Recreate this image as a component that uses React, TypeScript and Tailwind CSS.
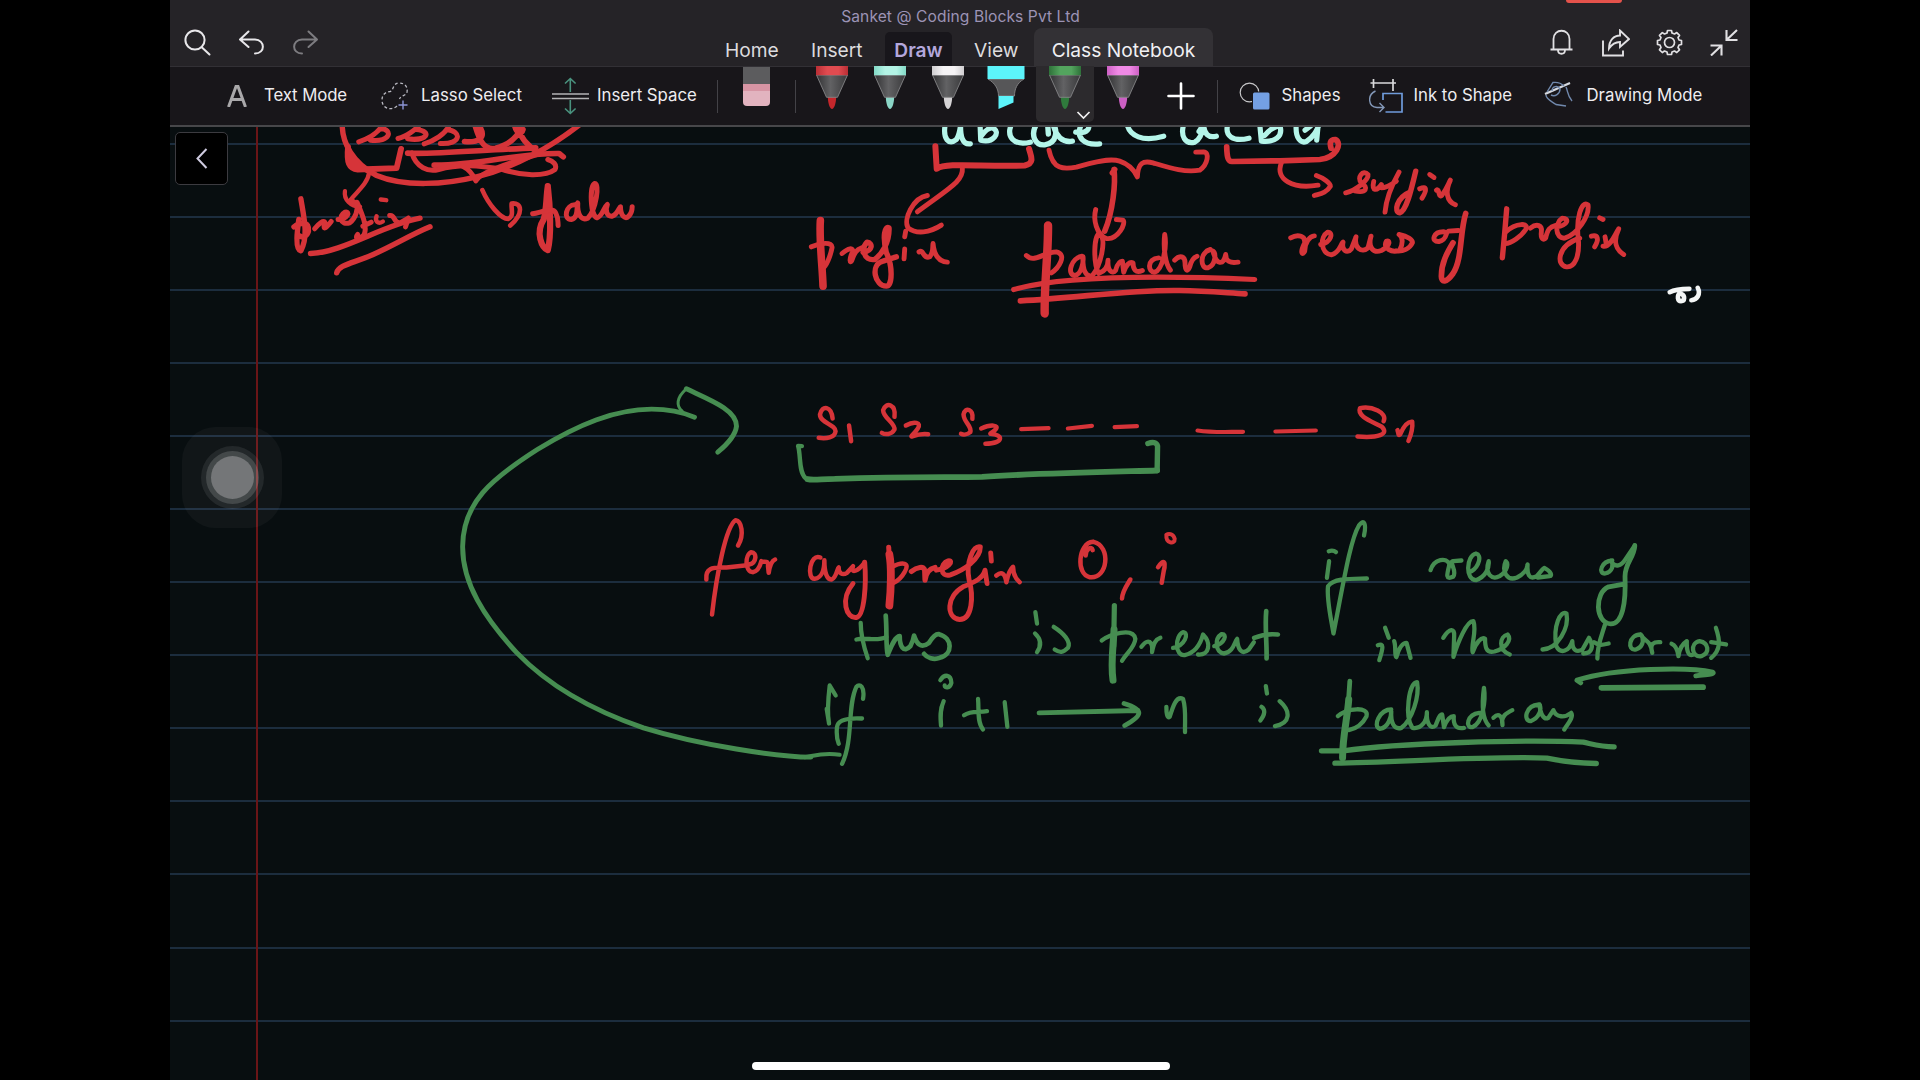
import React from "react";

type Stroke = { d: string; w?: number };
type InkLayer = { transform: string; color: string; width: number; strokes: Stroke[] };

const RED = "#d63439";
const GREEN = "#468d51";
const MINT = "#b4f5e9";

const A = "translate(170 119.5) scale(0.34439 0.33333)";
const B = "translate(779.7 119.5) scale(0.33333)";
const C = "translate(1239.7 119.5) scale(0.33333)";
const D = "translate(170 369.5) scale(0.40816 0.33333)";
const E = "translate(780 379.5) scale(0.42092 0.33333)";
const F = "translate(689.7 499.5) scale(0.33333)";
const G = "translate(1179.7 499.5) scale(0.36352 0.33333)";

const layers: InkLayer[] = [
  {
    transform: A,
    color: RED,
    width: 5,
    strokes: [
      { d: "M500 15 C500 70 530 130 600 168 C680 203 800 195 890 172 C1000 145 1110 80 1190 15", w: 5.4 },
      { d: "M548 67 C575 58 605 40 618 15 M610 26 C650 30 640 70 582 62" },
      { d: "M662 57 C685 52 715 30 728 12 M715 30 C765 36 745 66 690 58" },
      { d: "M738 73 C765 65 800 45 812 15 M803 30 C850 35 845 76 785 72" },
      { d: "M855 66 C890 70 925 58 895 15 M885 15 C900 70 915 92 945 86 C990 75 1012 50 1025 15 M1010 15 C1012 50 1040 80 1070 100 M1000 15 C1005 40 1020 50 1025 30", w: 5.6 },
      { d: "M690 101 C760 105 900 92 1062 85", w: 5.6 },
      { d: "M767 137 C900 138 1010 100 1130 102 L1142 112", w: 5.6 },
      { d: "M702 100 C715 145 750 158 780 150 C840 132 900 138 960 148 C1020 170 1090 172 1118 150 C1125 135 1112 125 1097 120" },
      { d: "M850 140 C870 150 880 165 888 184 C900 160 970 135 1075 102" },
      { d: "M517 82 C512 130 520 148 545 150 L658 146 L671 88 M522 105 C530 130 560 150 590 160", w: 5.8 },
      { d: "M578 160 C575 190 545 215 525 240 M508 215 C504 240 525 262 552 262 M525 240 L540 250", w: 4.3 },
      { d: "M380 238 C390 300 402 350 380 394 C362 390 370 330 374 300 M360 322 C382 305 405 308 402 335 C398 350 385 356 378 350", w: 5.4 },
      { d: "M420 328 C432 312 447 300 450 310 C444 328 448 334 468 306" },
      { d: "M488 300 C518 298 524 274 508 278 C488 290 494 318 522 310 C540 296 546 270 543 248 C556 280 574 320 564 345 C550 362 534 358 545 345 M560 320 L584 308" },
      { d: "M600 290 C594 305 604 315 618 306 M612 240 L628 242", w: 4.4 },
      { d: "M638 288 C655 285 648 312 668 310 L692 296 M692 296 L684 322" },
      { d: "M408 402 C500 400 620 315 726 296", w: 5.4 },
      { d: "M484 460 C490 436 530 432 590 405 C650 378 700 345 755 322", w: 5.4 },
      { d: "M907 212 C925 255 960 298 982 298 C1000 290 990 270 992 252 C1022 248 1028 282 988 318", w: 4.6 },
      { d: "M1097 200 C1104 260 1108 350 1097 392 C1080 385 1060 340 1085 300 C1094 270 1092 230 1097 200", w: 6.2 },
      { d: "M1053 283 C1080 278 1112 262 1120 280 C1128 295 1126 305 1127 318" },
      { d: "M1176 256 C1150 255 1140 300 1165 300 C1186 295 1180 268 1184 250 C1182 285 1195 305 1213 296 C1238 270 1248 190 1233 192 C1218 200 1220 288 1240 295 C1256 290 1258 265 1270 255 C1262 275 1270 292 1284 290 C1300 284 1305 262 1308 262 C1308 290 1322 300 1332 290 C1340 282 1342 270 1342 262" },
    ],
  },
  {
    transform: B,
    color: MINT,
    width: 5.2,
    strokes: [
      { d: "M497 12 C488 60 508 78 530 60 C540 45 542 25 543 10 C541 50 548 76 572 73" },
      { d: "M601 12 L603 62 C640 72 665 38 640 26 C625 22 612 40 606 48" },
      { d: "M695 15 C680 50 700 80 752 68" },
      { d: "M770 15 C752 45 765 78 795 76 C835 70 832 30 820 12 C828 50 848 70 878 65 M804 15 L806 44", w: 5.4 },
      { d: "M888 38 C925 44 932 25 925 10 M905 15 C885 55 915 78 960 73" },
      { d: "M1042 12 C1048 50 1090 68 1152 50" },
      { d: "M1213 12 C1200 50 1218 76 1245 68 C1265 58 1270 30 1272 12 C1272 45 1288 56 1310 50 M1258 36 L1268 20" },
      { d: "M1345 12 C1333 50 1360 68 1408 56" },
      { d: "M1440 12 L1445 65 C1485 70 1512 50 1500 18 M1455 48 C1465 35 1485 20 1497 20" },
      { d: "M1550 12 C1545 58 1565 72 1580 66 C1605 50 1612 30 1620 12 M1615 20 L1611 62 M1576 32 L1592 20" },
    ],
  },
  {
    transform: B,
    color: RED,
    width: 4.9,
    strokes: [
      { d: "M467 80 L471 148 C500 128 600 142 735 138 C765 132 755 112 748 88", w: 6 },
      { d: "M548 145 C552 185 510 205 413 277 M443 228 C400 235 370 300 385 325 C410 345 450 340 485 317" },
      { d: "M122 303 C118 360 128 440 130 500", w: 7.6 },
      { d: "M95 382 C120 370 160 365 157 385 C152 410 140 440 128 448" },
      { d: "M187 402 C205 386 222 382 218 398 C208 420 210 432 216 424 C224 400 230 390 246 385" },
      { d: "M250 398 C280 395 280 370 262 368 C245 385 250 425 285 420 C305 405 330 370 328 325 C315 318 308 350 320 400 C340 440 338 500 320 500 C285 500 270 435 310 425 C330 418 340 415 350 412", w: 5.4 },
      { d: "M375 388 L373 418 M378 335 L375 352" },
      { d: "M418 397 C432 388 430 420 450 412 C462 398 458 385 460 372 C463 410 480 426 503 428" },
      { d: "M808 92 C820 150 850 150 890 143 C940 128 990 115 1020 125 C1050 135 1065 155 1073 172 C1075 130 1090 122 1120 130 C1170 145 1215 160 1260 152 C1285 135 1290 97 1272 97 L1248 98" },
      { d: "M1003 150 C1008 190 1000 275 975 335 M998 160 L1005 150", w: 5.6 },
      { d: "M948 270 C940 300 950 345 980 357 C1015 362 1040 310 1030 302 L1010 300" },
      { d: "M805 318 C806 400 793 500 795 582", w: 8.4 },
      { d: "M740 408 C765 432 790 398 830 397 C865 405 835 448 815 460" },
      { d: "M907 410 C875 415 860 465 885 468 C905 465 912 430 910 412 C908 450 918 475 938 468 C962 440 982 360 960 342 C942 345 940 430 957 462 C975 455 985 440 985 422 C983 455 998 465 1008 452 C1014 430 1022 425 1028 425 L1032 458 C1040 435 1050 425 1060 430 C1060 450 1068 462 1088 453" },
      { d: "M1137 415 C1100 418 1105 460 1125 458 C1150 450 1162 380 1155 345 C1150 390 1158 435 1172 452" },
      { d: "M1185 422 C1200 405 1216 410 1216 430 C1216 455 1224 458 1230 442 C1234 425 1240 415 1252 410" },
      { d: "M1292 390 C1260 398 1260 448 1285 445 C1310 435 1308 400 1300 395 C1310 438 1332 438 1338 405 C1338 426 1352 432 1375 428" },
      { d: "M702 510 C850 468 1150 468 1425 480", w: 5.2 },
      { d: "M722 544 C900 535 1050 510 1200 513 C1280 514 1340 520 1396 523", w: 5.6 },
    ],
  },
  {
    transform: C,
    color: RED,
    width: 4.9,
    strokes: [
      { d: "M-39 82 C-38 115 -35 127 -22 126 L120 124 L240 120 C290 115 310 70 286 60 C270 60 270 72 274 86", w: 5.7 },
      { d: "M125 130 C105 180 160 210 235 197 M230 168 C250 175 272 190 272 200 C260 220 245 222 224 228" },
      { d: "M318 220 C350 212 388 180 385 165 C370 148 350 175 365 190 C388 205 380 222 345 214" },
      { d: "M402 186 C395 215 412 216 425 195 M478 158 C460 190 440 230 436 278 M425 205 C440 205 455 195 470 185" },
      { d: "M528 155 C515 210 500 275 480 280 C462 278 470 235 510 218", w: 5.4 },
      { d: "M540 208 C562 198 562 212 547 236 M570 165 L583 174" },
      { d: "M590 212 C600 205 595 236 606 228 C620 210 625 195 632 182 C616 215 620 245 647 256" },
      { d: "M153 355 C175 342 200 350 194 372 C180 400 188 410 195 395 C195 370 210 350 224 349" },
      { d: "M243 375 C275 368 282 338 264 338 C240 352 242 402 275 406 C300 400 302 375 310 368 C305 392 322 404 335 388 L349 352 C342 385 366 402 385 385 L394 350 C384 385 402 402 425 393 C455 378 450 360 440 365 C428 385 456 402 480 392 C492 370 488 350 478 345 C505 350 520 362 518 370 C510 388 490 396 470 394" },
      { d: "M615 337 C580 335 572 368 598 366 C625 360 615 340 626 335 L656 333" },
      { d: "M678 282 C660 340 668 420 640 462 C620 490 605 490 605 470 C605 430 622 400 640 370", w: 5.7 },
      { d: "M801 268 L795 340 L788 415", w: 5.4 },
      { d: "M797 338 C830 308 870 310 858 330 C845 350 815 372 797 372" },
      { d: "M872 326 C892 310 908 318 905 336 C902 358 912 364 918 355 C924 330 930 322 948 318" },
      { d: "M950 322 C985 318 990 296 968 296 C945 310 945 358 975 356 C1012 345 1050 290 1045 256 C1025 240 1008 300 1016 360 C1020 410 1005 445 980 442 C950 438 950 380 1020 356" },
      { d: "M1055 350 C1076 345 1078 360 1065 382 M1080 295 L1090 300" },
      { d: "M1090 380 C1112 385 1125 345 1137 328 C1118 368 1130 390 1152 405 M1096 352 L1100 375" },
    ],
  },
  {
    transform: C,
    color: "#f4f6f6",
    width: 4.6,
    strokes: [
      { d: "M1290 518 C1308 508 1344 508 1349 508 M1322 518 C1310 530 1314 545 1324 545 C1336 545 1336 528 1326 524" },
      { d: "M1374 505 C1384 525 1372 540 1355 542" },
    ],
  },
  {
    transform: D,
    color: GREEN,
    width: 4.9,
    strokes: [
      { d: "M1570 1163 C1490 1162 1300 1128 1160 1075 C1000 1008 905 920 850 850 C770 745 716 640 717 530 C718 400 785 330 900 240 C1000 165 1090 119 1180 119 C1220 119 1250 125 1285 143" },
      { d: "M1255 125 C1240 110 1240 85 1265 58", w: 3 },
      { d: "M1265 58 C1320 90 1388 120 1388 170 C1385 200 1365 225 1342 248" },
    ],
  },
  {
    transform: E,
    color: RED,
    width: 4.5,
    strokes: [
      { d: "M125 117 C122 80 100 75 95 105 C95 130 132 135 132 155 C130 175 110 178 92 175" },
      { d: "M164 138 L169 185" },
      { d: "M272 112 C276 75 252 65 245 92 C245 115 274 130 272 150 C265 166 250 166 242 160" },
      { d: "M299 138 C318 124 338 128 327 148 C318 165 308 172 314 171 C330 163 340 162 352 164" },
      { d: "M457 118 C460 90 440 80 436 105 C437 130 457 140 452 158 C445 166 435 166 430 163" },
      { d: "M478 147 C500 134 522 136 512 150 C505 160 498 162 500 163 C532 165 532 192 488 193" },
      { d: "M573 149 L638 146 M684 147 L741 139 M795 143 L848 140 M992 153 C1030 160 1060 157 1100 157 M1177 156 L1273 153", w: 4.2 },
      { d: "M1434 125 C1444 100 1405 78 1378 86 C1370 110 1405 125 1430 142 C1448 165 1420 176 1372 171" },
      { d: "M1467 152 C1470 160 1468 170 1473 165 C1480 145 1490 125 1502 127 C1504 150 1498 170 1493 184" },
    ],
  },
  {
    transform: E,
    color: GREEN,
    width: 5,
    strokes: [
      { d: "M52 200 L43 199 C50 230 44 275 60 295 C70 306 90 298 130 298", w: 4.4 },
      { d: "M65 299 C80 303 100 298 130 298 C300 290 400 294 480 292 C600 282 750 278 896 273", w: 5.8 },
      { d: "M896 273 L897 200 C895 188 885 187 874 192", w: 5.4 },
    ],
  },
  {
    transform: F,
    color: RED,
    width: 4.5,
    strokes: [
      { d: "M145 138 C165 105 155 64 138 62 C108 80 80 230 67 345 M50 240 C46 200 75 205 110 204 L165 198" },
      { d: "M178 195 C202 190 202 158 185 158 C165 165 165 218 190 218 C212 212 212 190 215 185 C225 190 236 180 235 200 L237 220 C240 200 244 185 256 180" },
      { d: "M392 174 C360 160 350 240 375 238 C398 235 404 205 404 182 C404 220 412 242 426 240 C440 235 442 208 447 204 C446 222 458 228 472 220 L490 200 C482 225 505 215 524 190" },
      { d: "M525 188 C530 250 525 350 500 354 C470 358 450 300 490 252", w: 4.9 },
      { d: "M597 143 L600 200", w: 5 },
      { d: "M599 165 C606 200 604 270 599 318", w: 7.8 },
      { d: "M605 203 C640 185 662 190 645 217 C635 235 622 245 612 250" },
      { d: "M665 216 C680 204 705 196 705 215 L706 242 C708 225 715 208 736 204", w: 5.2 },
      { d: "M740 212 C775 208 795 182 775 184 C750 192 750 235 782 226 C822 212 872 180 872 142 C850 135 828 190 838 240 C852 290 848 360 810 360 C768 355 770 290 820 262 C860 246 880 235 886 212 L892 252 M903 160 L905 185", w: 4.9 },
      { d: "M920 228 C936 214 946 222 950 248 C955 225 960 210 970 202 C970 225 980 240 990 248" },
      { d: "M1210 127 C1165 130 1158 225 1200 233 C1255 240 1265 140 1212 127 M1188 168 C1188 148 1206 138 1209 152" },
      { d: "M1322 240 C1310 260 1298 275 1297 297 M1405 203 C1422 178 1430 185 1422 215 L1416 250" },
      { d: "M1430 106 C1428 132 1456 136 1455 118 C1450 100 1435 102 1430 106", w: 4 },
    ],
  },
  {
    transform: F,
    color: GREEN,
    width: 4.3,
    strokes: [
      { d: "M345 773 C370 770 400 758 450 766", w: 4 },
      { d: "M513 370 C513 410 525 450 534 476 M500 420 C530 412 560 428 590 412" },
      { d: "M588 348 C592 390 588 440 594 466 C605 440 615 412 630 410 C630 440 642 462 662 440 C670 425 672 415 673 408 C680 430 692 450 718 430 C730 410 738 402 748 404 C790 415 790 465 750 475 C732 482 712 475 703 463", w: 4.7 },
      { d: "M1037 338 L1042 372 M1036 402 C1056 420 1054 440 1042 458 M1092 382 C1120 400 1145 425 1135 445 C1120 460 1110 460 1095 450" },
      { d: "M1274 318 L1272 440", w: 5.2 },
      { d: "M1273 390 C1272 430 1262 490 1270 542", w: 7 },
      { d: "M1236 423 C1260 405 1330 382 1337 418 C1335 445 1310 460 1297 484" },
      { d: "M1355 442 C1375 415 1390 425 1387 458 C1392 430 1398 420 1412 415" },
      { d: "M1450 445 C1485 440 1500 400 1480 398 C1455 410 1455 470 1485 467 C1515 460 1532 435 1540 405 C1565 430 1560 468 1525 465" },
      { d: "M418 672 C412 640 415 600 420 558 L438 588 M411 628 L418 672" },
      { d: "M520 598 C526 562 510 550 500 562 C472 620 492 720 457 793 M517 657 C480 655 445 660 442 682 C440 700 442 720 447 733" },
      { d: "M762 605 C750 630 752 655 754 678 M752 542 C765 522 784 525 785 550 C780 568 765 566 765 558" },
      { d: "M865 598 C868 630 862 670 880 690 M823 647 C845 632 865 640 892 635 M945 608 L953 682" },
      { d: "M1048 640 L1345 633 M1303 612 C1364 630 1360 648 1305 678", w: 4.8 },
      { d: "M1430 622 C1430 640 1432 658 1440 652 C1450 620 1460 588 1480 598 C1490 630 1485 660 1486 698" },
    ],
  },
  {
    transform: G,
    color: GREEN,
    width: 4.3,
    strokes: [
      { d: "M95 440 C125 432 132 402 115 404 C95 418 98 460 122 462 C148 458 150 428 158 418 C160 450 170 468 190 450 L204 428" },
      { d: "M238 335 C234 380 240 430 239 477 M205 415 C225 406 250 403 270 405", w: 4.7 },
      { d: "M405 235 L411 185 M410 155 C418 152 424 152 430 158" },
      { d: "M507 108 C515 70 505 58 493 78 C470 120 452 240 423 402 C415 350 404 300 408 260 C425 235 470 238 515 237" },
      { d: "M690 212 C700 178 735 172 742 195 C735 225 730 242 752 232 C765 215 740 188 752 185 L775 183" },
      { d: "M803 215 C824 200 832 166 815 162 C788 168 785 242 815 242 C842 232 852 205 850 185 C838 225 860 242 880 230 C902 215 905 192 897 185 C885 215 900 246 928 234 C950 222 955 210 957 195 C955 225 962 242 982 230 C995 215 1000 205 1003 205 C1022 215 1025 230 1018 230 L985 234" },
      { d: "M1190 183 C1160 185 1150 222 1170 222 C1190 218 1196 195 1186 183 C1198 208 1215 198 1226 180 L1252 138" },
      { d: "M1252 138 C1250 175 1225 190 1225 230 C1228 310 1218 375 1185 373 C1143 370 1140 280 1180 262 L1222 254", w: 4.8 },
      { d: "M565 385 L575 415 M545 437 C562 430 560 445 549 482 M590 425 C596 445 590 470 596 473 C602 450 612 430 624 430 L635 475" },
      { d: "M725 415 C742 385 757 385 755 410 L753 472 C765 430 790 362 808 365 C818 395 800 440 806 458 C815 430 830 410 840 418 C840 440 842 462 866 456 C895 448 915 422 902 405 C880 410 875 452 908 465" },
      { d: "M998 450 C1040 448 1072 385 1064 342 C1048 330 1026 380 1036 440 C1048 465 1072 455 1080 425 C1080 452 1092 460 1108 450 L1126 415 C1140 440 1135 462 1110 462" },
      { d: "M1170 375 C1160 410 1148 440 1149 477 M1140 428 C1155 440 1165 436 1180 432" },
      { d: "M1268 405 C1235 405 1230 455 1255 450 C1280 440 1276 412 1268 405 C1280 428 1295 420 1300 460 C1292 432 1305 426 1322 428" },
      { d: "M1353 433 C1366 438 1370 455 1372 470 C1375 442 1385 432 1395 425 C1394 450 1398 472 1412 466 M1430 425 C1403 430 1408 475 1435 470 C1460 460 1455 430 1430 425" },
      { d: "M1475 385 C1486 420 1490 450 1462 475 M1462 428 L1503 435" },
      { d: "M1103 550 L1093 542 C1200 505 1400 502 1466 518 C1475 526 1440 524 1420 529", w: 5 },
      { d: "M1160 565 L1440 563", w: 5.6 },
      { d: "M237 560 L240 582 M225 622 C236 630 235 645 222 663 M275 605 C306 635 306 670 262 680" },
      { d: "M468 545 L462 640", w: 4.8 },
      { d: "M465 600 C462 650 448 710 448 775", w: 7 },
      { d: "M435 650 C460 625 522 620 514 650 C500 680 482 688 465 692" },
      { d: "M582 630 C550 630 530 680 550 688 C575 685 582 650 582 635 C580 670 590 692 610 685 C640 660 660 590 653 548 C630 550 618 650 640 685 C665 690 680 665 680 638 C678 670 690 692 704 678 C712 655 716 645 722 645 L727 683 C735 660 745 650 754 650 C752 675 760 690 782 685" },
      { d: "M824 640 C790 645 785 685 805 683 C835 670 842 600 837 565 C830 620 835 660 850 678 M863 655 C878 638 888 650 888 677 C882 650 900 640 915 632" },
      { d: "M988 615 C950 618 945 665 965 665 C990 655 996 630 990 615 C992 645 1002 662 1014 655 L1028 632 C1035 655 1060 655 1077 640 C1085 655 1065 675 1058 690" },
      { d: "M390 754 L450 754 C600 730 950 720 1110 728 C1140 735 1160 742 1195 742", w: 5.3 },
      { d: "M427 791 C600 788 880 768 1010 776 C1050 785 1080 791 1146 792", w: 5.3 },
    ],
  },
];

function Ink() {
  return (
    <svg className="absolute inset-0 h-full w-full" viewBox="170 127 1580 953" fill="none" strokeLinecap="round" strokeLinejoin="round">
      {layers.map((layer, i) => (
        <g key={i} transform={layer.transform} stroke={layer.color}>
          {layer.strokes.map((s, j) => (
            <path key={j} d={s.d} strokeWidth={s.w ?? layer.width} vectorEffect="non-scaling-stroke" />
          ))}
        </g>
      ))}
    </svg>
  );
}

function Pen({ id, color, light, tip }: { id: string; color: string; light: string; tip: string }) {
  return (
    <svg className="h-[44px] w-[34px]" viewBox="0 0 34 44">
      <defs>
        <linearGradient id={`${id}-cap`}>
          <stop offset="0" stopColor={color} />
          <stop offset="0.35" stopColor={light} />
          <stop offset="0.7" stopColor={light} />
          <stop offset="1" stopColor={color} />
        </linearGradient>
        <linearGradient id={`${id}-cone`}>
          <stop offset="0.1" stopColor="#3c3c3e" />
          <stop offset="0.45" stopColor="#626264" />
          <stop offset="0.9" stopColor="#414143" />
        </linearGradient>
      </defs>
      <path d="M12.8 31 C13 38 15 43 17 43 C19 43 21 38 21.2 31 Z" fill={tip} />
      <path d="M1.5 9 L32.5 9 L22.5 31.3 L11.5 31.3 Z" fill={`url(#${id}-cone)`} stroke="#858587" strokeWidth="0.9" />
      <rect x="1" y="0" width="32" height="9.2" fill={`url(#${id}-cap)`} />
    </svg>
  );
}

function Highlighter() {
  return (
    <svg className="h-[44px] w-[38px]" viewBox="0 0 38 44">
      <path d="M1 13 L37 13 C30 17 27.500 23 27.500 30 L11.500 30 C11.500 23 8 17 1 13 Z" fill="#565658" stroke="#858587" strokeWidth="0.9" />
      <rect x="0.500" y="0" width="37" height="13" fill="#5cf4fb" />
      <path d="M11.500 30 L26.500 30 L26.500 36.500 L11.500 43 Z" fill="#5cf4fb" />
    </svg>
  );
}

const Divider = () => <div className="h-[33px] w-px shrink-0 bg-[#434247]" />;

const label = "shrink-0 whitespace-nowrap text-[16.8px] text-[#eeedf0]";

function Toolbar() {
  return (
    <div className="flex h-[61px] shrink-0 items-center border-b-2 border-t border-b-[#47474a] border-t-[#323035] bg-[#18161a]">
      <svg className="ml-[57px] h-[22px] w-[20px] shrink-0" viewBox="0 0 20 22" fill="none" stroke="#a9a8aa" strokeWidth="3">
        <path d="M1.500 22 L9 1.500 H11 L18.500 22 M4.500 14.500 H15.500" />
      </svg>
      <span className={`${label} ml-[17px] w-[117px] tracking-[-0.1px]`}>Text Mode</span>
      <svg className="h-[28px] w-[28px] shrink-0" viewBox="0 0 28 28" fill="none">
        <path d="M16 24 C11 29 1 27 1 18 C1 13 4 10 9 9.500 C13 9 11 1.500 18 1 C24 1 27 5 26 10 C25 14 20 13 18.500 17" stroke="#b9b9c2" strokeWidth="1.300" strokeDasharray="3 2.300" />
        <path d="M22 18.500 V27.500 M17.500 23 H26.500" stroke="#8c95d6" strokeWidth="1.400" />
      </svg>
      <span className={`${label} ml-[12px] w-[131px]`}>Lasso Select</span>
      <svg className="h-[38px] w-[37px] shrink-0" viewBox="0 0 37 38" fill="none">
        <path d="M18.300 15 V2 M13 6.500 L18.300 1.500 L23.600 6.500 M18.300 23 V36 M13 31.500 L18.300 36.500 L23.600 31.500" stroke="#49927e" strokeWidth="1.600" />
        <path d="M0 17 H37 M0 21.500 H37" stroke="#b3b3b5" strokeWidth="1.700" />
      </svg>
      <span className={`${label} ml-[8px] w-[120px]`}>Insert Space</span>
      <Divider />
      <div className="ml-[25px] mr-[25px] flex w-[27px] shrink-0 flex-col self-start overflow-hidden rounded-b-[4px]">
        <div className="h-[17px] bg-[#5c5c5e]" />
        <div className="h-[7px] bg-[#d795a4]" />
        <div className="h-[15px] bg-[#e2b3bf]" />
      </div>
      <Divider />
      <div className="ml-[6.400px] flex h-full shrink-0">
        <div className="-mt-px flex w-[58.300px] justify-center"><Pen id="red" color="#b92e35" light="#e04b50" tip="#c4272c" /></div>
        <div className="-mt-px flex w-[58.300px] justify-center"><Pen id="mint" color="#83d9c7" light="#b3f3e5" tip="#8bd6c7" /></div>
        <div className="-mt-px flex w-[58.300px] justify-center"><Pen id="white" color="#cfcdd0" light="#f5f3f5" tip="#d5d3d5" /></div>
        <div className="-mt-px flex w-[58.300px] justify-center"><Highlighter /></div>
        <div className="relative -mt-px flex h-[56px] w-[58.300px] justify-center rounded-b-[5px] bg-[#2c2a2d]">
          <Pen id="green" color="#2e7139" light="#53a45e" tip="#2f7a3c" />
          <svg className="absolute bottom-[2px] right-[3px] h-[9px] w-[15px]" viewBox="0 0 15 9" fill="none" stroke="#f2f2f2" strokeWidth="1.700">
            <path d="M1.500 1 L7.500 7 L13.500 1" />
          </svg>
        </div>
        <div className="-mt-px flex w-[58.300px] justify-center"><Pen id="pink" color="#cd60c4" light="#f08ae6" tip="#cb5fc3" /></div>
        <div className="flex w-[58.300px] items-center justify-center">
          <svg className="h-[28px] w-[28px]" viewBox="0 0 28 28" stroke="#ffffff" strokeWidth="2.600" strokeLinecap="round">
            <path d="M14 1.500 V26.500 M1.500 14 H26.500" />
          </svg>
        </div>
      </div>
      <div className="ml-[7px] flex shrink-0"><Divider /></div>
      <svg className="ml-[21px] h-[28px] w-[31px] shrink-0" viewBox="0 0 31 28" fill="none">
        <circle cx="10.500" cy="10.500" r="9.300" stroke="#c6c6c8" strokeWidth="1.200" />
        <rect x="13" y="9.500" width="18" height="18" rx="2" fill="#18161a" />
        <rect x="14" y="10.500" width="16.500" height="17" rx="1.500" fill="#74a0e4" />
      </svg>
      <span className={`${label} ml-[11px] w-[88px]`}>Shapes</span>
      <svg className="h-[36px] w-[34px] shrink-0" viewBox="0 0 34 36" fill="none">
        <path d="M1.500 5 H27 M4.500 1 V10 M24 1 V13" stroke="#d9d9db" strokeWidth="1.700" />
        <path d="M6.500 13 C-2 17 -1 29 8 29.500 H14.500 M10.500 25 L15 29.500 L10.500 34" stroke="#8398b8" strokeWidth="1.400" />
        <path d="M14 22 V15.500 H33 V34 H16.500" stroke="#6f9bdb" strokeWidth="1.700" />
      </svg>
      <span className={`${label} ml-[10px] w-[131px]`}>Ink to Shape</span>
      <svg className="mb-[5px] h-[26px] w-[29px] shrink-0" viewBox="0 0 29 26" fill="none">
        <path d="M1 13 L26 2" stroke="#d5d9e0" strokeWidth="2.300" />
        <path d="M2 14 C2 18 7 20 12 23.500 L22 25 M3 11 L9 1.500 C13 1 17 2 20 5 M8 10 C8 5 14 4 16 8 C16 13 11 16 7 14 M22 6 C24 10 23 14 28 20" stroke="#7189ad" strokeWidth="1.400" />
      </svg>
      <span className={`${label} ml-[13px]`}>Drawing Mode</span>
    </div>
  );
}

const tab = "whitespace-nowrap text-[19.2px] leading-[24px] text-[#dcdbde]";

function Header() {
  return (
    <header className="relative flex h-[66px] shrink-0 bg-[#252327]">
      <div className="flex w-[541px] items-center gap-[27px] pl-[14px] pt-[19px]">
        <svg className="h-[27px] w-[27px]" viewBox="0 0 27 27" fill="none" stroke="#e8e7ea" strokeWidth="2" strokeLinecap="round">
          <circle cx="11" cy="11" r="9.600" /><path d="M18 18.500 L25.500 25.500" />
        </svg>
        <svg className="h-[26px] w-[27px]" viewBox="0 0 27 26" fill="none" stroke="#e8e7ea" strokeWidth="2" strokeLinecap="round" strokeLinejoin="round">
          <path d="M10.500 1.500 L2 9.500 L10.500 17 M2.500 9.500 H17 C27.500 10 27.500 23.500 17 23.500" />
        </svg>
        <svg className="h-[26px] w-[27px]" viewBox="0 0 27 26" fill="none" stroke="#7d7c80" strokeWidth="2" strokeLinecap="round" strokeLinejoin="round">
          <path d="M16.500 1.500 L25 9.500 L16.500 17 M24.500 9.500 H10 C-0.500 10 -0.500 23.500 10 23.500" />
        </svg>
      </div>
      <div className="flex w-[502px] shrink-0 flex-col">
        <div className="flex h-[28px] justify-center pr-[3px] pt-[6px]">
          <span className="whitespace-nowrap text-[15.600px] leading-[22px] tracking-[0.08px] text-[#9c93b5]">Sanket @ Coding Blocks Pvt Ltd</span>
        </div>
        <div className="flex h-[38px] items-end">
          <span className={`${tab} w-[86px] pb-[4px] pl-[14px]`}>Home</span>
          <span className={`${tab} w-[88px] pb-[4px] pl-[14px]`}>Insert</span>
          <span className="flex h-[34px] w-[67px] items-end justify-center whitespace-nowrap rounded-t-[5px] bg-[#18161b] pb-[4px] text-[19.2px] font-semibold leading-[24px] text-[#b3a7dc]">Draw</span>
          <span className={`${tab} w-[82px] pb-[4px] pl-[22px]`}>View</span>
          <span className="flex h-[38px] w-[179px] items-end justify-center whitespace-nowrap rounded-t-[8px] bg-[#333135] pb-[4px] text-[19.2px] leading-[24px] text-[#f1f0f3]">Class Notebook</span>
        </div>
      </div>
      <div className="ml-auto flex items-center gap-[26px] pr-[12px] pt-[19px]">
        <svg className="h-[27px] w-[27px]" viewBox="0 0 27 27" fill="none" stroke="#e1e0e3" strokeWidth="1.800">
          <path d="M2.500 20.500 H24.500 M5.500 20 V10 C5.500 -1 21.500 -1 21.500 10 V20 M10 21 C10 26 17 26 17 21" />
        </svg>
        <svg className="h-[28px] w-[29px]" viewBox="0 0 29 28" fill="none" stroke="#e1e0e3" strokeWidth="1.900">
          <path d="M2 11.500 V26.500 H22 V21.500" />
          <path d="M8 19.500 C8 11 13 6.500 19 6.500 V1.500 L28 10 L19 18 V13 C14 13 11 15 8 19.500 Z" />
        </svg>
        <svg className="h-[27px] w-[27px]" viewBox="0 0 27 27" fill="none" stroke="#e1e0e3" strokeWidth="1.700" strokeLinejoin="round">
          <path d="M11 4 L11.500 1.500 H15.500 L16 4 L18.500 5 L20.800 3.600 L23.500 6.400 L22 8.500 L23 11 L25.500 11.500 V15.500 L23 16 L22 18.500 L23.500 20.800 L20.800 23.500 L18.500 22 L16 23 L15.500 25.500 H11.500 L11 23 L8.500 22 L6.300 23.500 L3.500 20.800 L5 18.500 L4 16 L1.500 15.500 V11.500 L4 11 L5 8.500 L3.500 6.400 L6.300 3.600 L8.500 5 Z" />
          <circle cx="13.500" cy="13.500" r="5" />
        </svg>
        <svg className="h-[27px] w-[29px]" viewBox="0 0 29 27" fill="none" stroke="#e1e0e3" strokeWidth="2.100">
          <path d="M17.500 1 V11 H28.500 M17.500 11 L28 1 M1.500 16.500 H12.500 V26.500 M12.500 16.500 L2 26.500" />
        </svg>
      </div>
      <div className="absolute right-[128px] top-0 h-[3px] w-[56px] rounded-b-[3px] bg-[#e4524b]" />
    </header>
  );
}

export default function App() {
  return (
    <div className="flex h-[1080px] w-[1920px] justify-center overflow-hidden bg-black" style={{ fontFamily: 'Inter, "Liberation Sans", sans-serif' }}>
      <div className="flex w-[1580px] flex-col">
        <Header />
        <Toolbar />
        <main className="relative flex-1 overflow-hidden bg-[#080e10]">
          <div className="h-[18px] border-b-2 border-[#1c2d3e]" />
          {Array.from({ length: 12 }, (_, i) => (
            <div key={i} className="h-[73.050px] border-b-2 border-[#1c2d3e]" />
          ))}
          <div className="absolute inset-y-0 left-[86px] w-[2px] bg-[#6a1517]" />
          <Ink />
          <button className="absolute left-[5px] top-[5px] flex h-[53px] w-[53px] items-center justify-center rounded-[5px] border border-[#3c3b40] bg-black">
            <svg className="h-[21px] w-[12px]" viewBox="0 0 12 21" fill="none" stroke="#cfcbe0" strokeWidth="2">
              <path d="M10.500 1 L1.500 10.500 L10.500 20" />
            </svg>
          </button>
          <div className="absolute left-[12px] top-[300px] flex h-[101px] w-[100px] items-center justify-center rounded-[34px] bg-white/[0.035]">
            <div className="flex h-[63px] w-[63px] items-center justify-center rounded-full bg-white/[0.08]">
              <div className="flex h-[53px] w-[53px] items-center justify-center rounded-full bg-white/[0.15]">
                <div className="h-[43px] w-[43px] rounded-full bg-[#747678]" />
              </div>
            </div>
          </div>
          <div className="absolute bottom-[10px] left-[582px] h-[8px] w-[418px] rounded-full bg-white" />
        </main>
      </div>
    </div>
  );
}
